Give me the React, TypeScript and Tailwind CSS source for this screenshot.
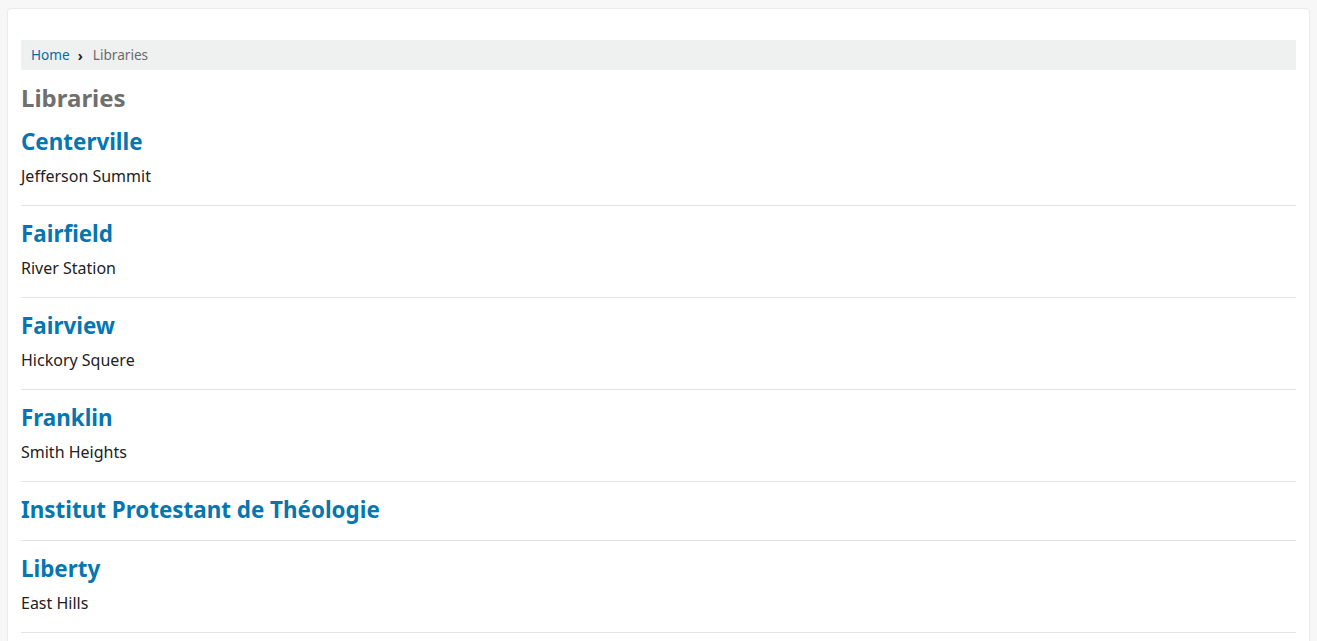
const libraries = [
  { name: 'Centerville', address: 'Jefferson Summit' },
  { name: 'Fairfield', address: 'River Station' },
  { name: 'Fairview', address: 'Hickory Squere' },
  { name: 'Franklin', address: 'Smith Heights' },
  { name: 'Institut Protestant de Théologie', address: '' },
  { name: 'Liberty', address: 'East Hills' },
]

export default function App() {
  return (
    <div className="min-h-screen bg-[#f8f7f8] pt-2 px-[7px] font-['Noto_Sans',sans-serif]">
      <div className="bg-white border border-[#ebebeb] rounded-sm px-[13px] pt-[31px] pb-8">
        {/* Breadcrumb */}
        <nav className="flex items-center h-[30px] bg-[#eff1f1] px-[10px] text-[13.6px]">
          <a href="#" className="text-[#0b6a9f]">Home</a>
          <span className="ml-[8px] mr-[10px] text-[#222] font-bold text-[14px]">›</span>
          <span className="text-[#6b6b6b]">Libraries</span>
        </nav>

        <h1 className="mt-[14px] text-[24px] leading-[1.2] font-bold text-[#6f6f6f]">Libraries</h1>

        <div className="pt-px">
          {libraries.map(lib => (
            <div key={lib.name} className="pt-[14px] pb-[16px] border-b border-[#e3e3e3]">
              <h2 className="text-[22.4px] leading-[28px] font-bold text-[#0576b0]">
                <a href="#">{lib.name}</a>
              </h2>
              {lib.address && (
                <p className="mt-[8px] mb-px text-[16px] leading-[24px] text-[#222]">{lib.address}</p>
              )}
            </div>
          ))}
        </div>
      </div>
    </div>
  )
}
